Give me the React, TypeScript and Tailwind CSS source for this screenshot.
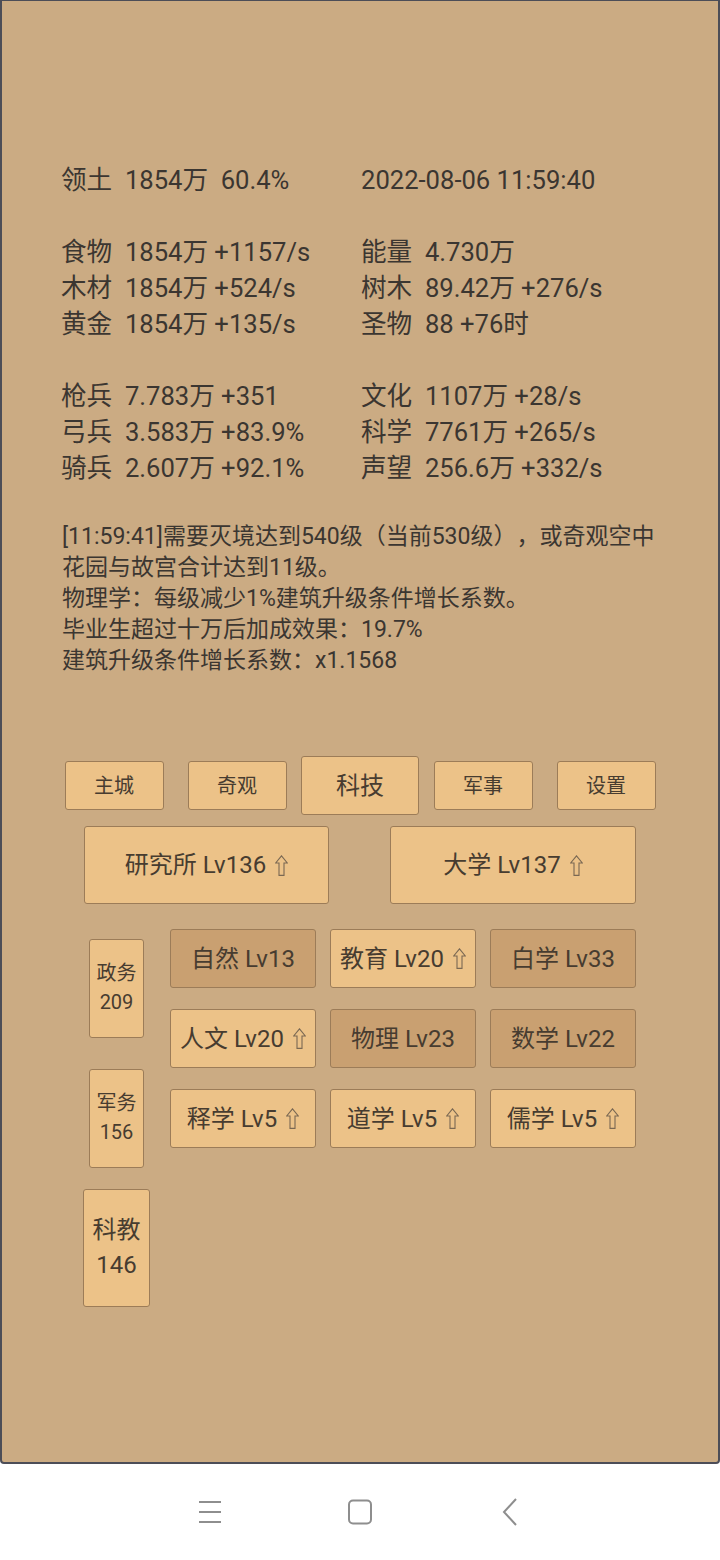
import React from "react";

const Up = () => (
  <svg viewBox="0 0 13 21" className="w-[13px] h-[21px] shrink-0" fill="none" stroke="#7a6853" strokeWidth="1.1">
    <path d="M6.5 0.8 L12.3 8 H9 V20.4 H4 V8 H0.7 Z" />
  </svg>
);

type Row = [string, string, string, string] | null;

const rows: Row[] = [
  ["领土", "1854万  60.4%", "", "2022-08-06 11:59:40"],
  null,
  ["食物", "1854万 +1157/s", "能量", "4.730万"],
  ["木材", "1854万 +524/s", "树木", "89.42万 +276/s"],
  ["黄金", "1854万 +135/s", "圣物", "88 +76时"],
  null,
  ["枪兵", "7.783万 +351", "文化", "1107万 +28/s"],
  ["弓兵", "3.583万 +83.9%", "科学", "7761万 +265/s"],
  ["骑兵", "2.607万 +92.1%", "声望", "256.6万 +332/s"],
];

const logLines = [
  "[11:59:41]需要灭境达到540级（当前530级），或奇观空中",
  "花园与故宫合计达到11级。",
  "物理学：每级减少1%建筑升级条件增长系数。",
  "毕业生超过十万后加成效果：19.7%",
  "建筑升级条件增长系数：x1.1568",
];

const tech: { t: string; up: boolean; dark: boolean }[] = [
  { t: "自然 Lv13", up: false, dark: true },
  { t: "教育 Lv20", up: true, dark: false },
  { t: "白学 Lv33", up: false, dark: true },
  { t: "人文 Lv20", up: true, dark: false },
  { t: "物理 Lv23", up: false, dark: true },
  { t: "数学 Lv22", up: false, dark: true },
  { t: "释学 Lv5", up: true, dark: false },
  { t: "道学 Lv5", up: true, dark: false },
  { t: "儒学 Lv5", up: true, dark: false },
];

function Cell({ label, value }: { label: string; value: string }) {
  return (
    <div className="whitespace-pre">
      {label ? label + "  " : ""}
      {value}
    </div>
  );
}

export default function App() {
  return (
    <div className="w-[720px] h-[1560px] flex flex-col font-['Roboto','Noto_Sans_CJK_SC',sans-serif] bg-white [text-spacing-trim:space-all]">
      <div className="h-[1464px] bg-[#cbab83] border-2 border-t border-[#4c4d57] rounded-b-[4px] flex flex-col pt-[161px]">
        {/* stats */}
        <div className="pl-[59px] text-[25.6px] leading-[36px] text-[#3b3631]">
          {rows.map((r, i) =>
            r ? (
              <div key={i} className="grid grid-cols-[300px_1fr] h-[36px]">
                <Cell label={r[0]} value={r[1]} />
                <Cell label={r[2]} value={r[3]} />
              </div>
            ) : (
              <div key={i} className="h-[36px]" />
            )
          )}
        </div>

        {/* log */}
        <div className="pl-[60px] mt-[35px] text-[23px] leading-[31px] text-[#3b3631]">
          {logLines.map((l, i) => (
            <div key={i} className="whitespace-nowrap">
              {l}
            </div>
          ))}
        </div>

        {/* nav tabs */}
        <div className="mt-[80px] w-[615px] mx-auto grid grid-cols-5 items-center justify-items-center h-[59px] text-[#473c30]">
          {["主城", "奇观", "科技", "军事", "设置"].map((t) =>
            t === "科技" ? (
              <div key={t} className="w-[118px] h-[59px] flex items-center justify-center bg-[#ecc288] border border-[#9c7c58] rounded-[3px] text-[24px]">
                {t}
              </div>
            ) : (
              <div key={t} className="w-[99px] h-[49px] flex items-center justify-center bg-[#ecc288] border border-[#9c7c58] rounded-[3px] text-[20px]">
                {t}
              </div>
            )
          )}
        </div>

        {/* buildings */}
        <div className="mt-[11px] flex justify-center gap-[61px] text-[24px] text-[#473c30]">
          <div className="w-[245px] h-[78px] flex items-center justify-center gap-[9px] bg-[#ecc288] border border-[#9c7c58] rounded-[3px]">
            <span>研究所 Lv136</span>
            <Up />
          </div>
          <div className="w-[246px] h-[78px] flex items-center justify-center gap-[9px] bg-[#ecc288] border border-[#9c7c58] rounded-[3px]">
            <span>大学 Lv137</span>
            <Up />
          </div>
        </div>

        {/* bottom */}
        <div className="mt-[19px] flex pl-[81px] gap-[20px] text-[#473c30]">
          <div className="w-[67px] flex flex-col">
            <div className="h-[130px] flex items-center justify-center">
              <div className="w-[55px] h-[99px] flex flex-col items-center justify-center bg-[#ecc288] border border-[#9c7c58] rounded-[3px] text-[20px] leading-[29px]">
                <span>政务</span>
                <span>209</span>
              </div>
            </div>
            <div className="h-[130px] flex items-center justify-center">
              <div className="w-[55px] h-[99px] flex flex-col items-center justify-center bg-[#ecc288] border border-[#9c7c58] rounded-[3px] text-[20px] leading-[29px]">
                <span>军务</span>
                <span>156</span>
              </div>
            </div>
            <div className="h-[130px] flex items-center justify-center">
              <div className="w-[67px] h-[118px] flex flex-col items-center justify-center bg-[#ecc288] border border-[#9c7c58] rounded-[3px] text-[24px] leading-[35px]">
                <span>科教</span>
                <span>146</span>
              </div>
            </div>
          </div>
          <div className="pt-[6px]">
            <div className="grid grid-cols-[146px_146px_146px] gap-x-[14px] gap-y-[21px] text-[24px]">
              {tech.map((b) => (
                <div
                  key={b.t}
                  className={
                    b.dark
                      ? "h-[59px] flex items-center justify-center gap-[9px] bg-[#c9a071] border border-[#9c7c58] rounded-[3px]"
                      : "h-[59px] flex items-center justify-center gap-[9px] bg-[#ecc288] border border-[#9c7c58] rounded-[3px]"
                  }
                >
                  <span>{b.t}</span>
                  {b.up && <Up />}
                </div>
              ))}
            </div>
          </div>
        </div>
      </div>

      {/* system nav */}
      <div className="h-[96px] bg-white flex items-center justify-center">
        <div className="w-[450px] grid grid-cols-3 justify-items-center items-center">
          <svg width="24" height="24" viewBox="0 0 24 24" fill="none" stroke="#8e8e8e" strokeWidth="2">
            <path d="M1 2 H23 M1 12 H23 M1 22 H23" />
          </svg>
          <svg width="26" height="26" viewBox="0 0 26 26" fill="none" stroke="#8e8e8e" strokeWidth="2">
            <rect x="2" y="1.5" width="22" height="23" rx="4" />
          </svg>
          <svg width="16" height="28" viewBox="0 0 16 28" fill="none" stroke="#8e8e8e" strokeWidth="2">
            <path d="M14 1 L2 14 L14 27" />
          </svg>
        </div>
      </div>
    </div>
  );
}
